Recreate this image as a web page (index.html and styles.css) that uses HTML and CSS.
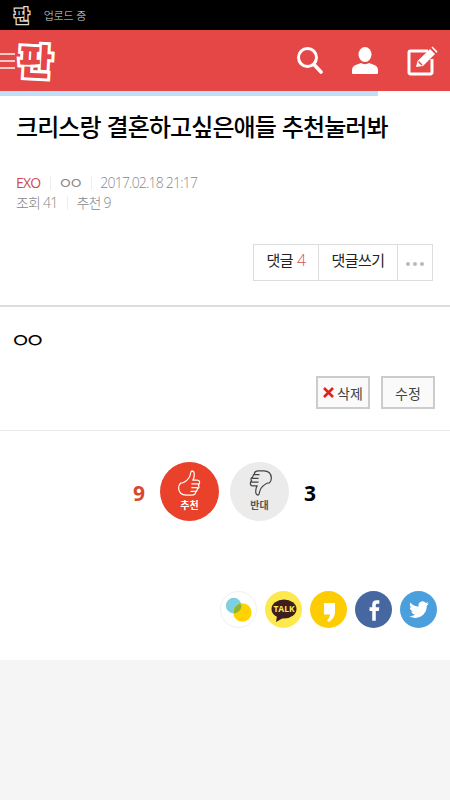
FILE: index.html
```html
<!DOCTYPE html>
<html lang="ko">
<head>
<meta charset="utf-8">
<title>판</title>
<link rel="stylesheet" href="styles.css">
</head>
<body>
<div class="status">
  <span class="status-logo">판</span>
  <span class="status-text">업로드 중</span>
</div>
<header class="top">
  <div class="brand">
    <svg class="burger" width="16" height="20" viewBox="0 0 16 20"><path d="M0 3h15M0 10h15M0 17h15" stroke="#f7c9c7" stroke-width="2"/></svg>
    <span class="logo">판</span>
  </div>
  <div class="tools">
    <svg class="tool-search" width="26" height="27" viewBox="0 0 26 27"><circle cx="10.500" cy="10.500" r="9" fill="none" stroke="#fff" stroke-width="3"/><path d="M17 17.500l7 7.500" stroke="#fff" stroke-width="3.600" stroke-linecap="round"/></svg>
    <svg class="tool-user" width="28" height="27" viewBox="0 0 28 27"><ellipse cx="14" cy="7.500" rx="6.500" ry="7.500" fill="#fff"/><path d="M1 26v-3c0-3 2-4.500 5-5.500l4-1.500c2 1.500 6 1.500 8 0l4 1.500c3 1 5 2.500 5 5.500v3a1 1 0 0 1-1 1H2a1 1 0 0 1-1-1z" fill="#fff"/></svg>
    <svg class="tool-edit" width="31" height="30" viewBox="0 0 31 30"><path d="M21 5H3.500A1.500 1.500 0 0 0 2 6.500v20A1.500 1.500 0 0 0 3.500 28h20a1.500 1.500 0 0 0 1.500-1.500V13" fill="none" stroke="#fff" stroke-width="3"/><path d="M9 21l1.500-6L23 3l5 5-12 12z" fill="#fff"/><path d="M24.500 1.500l1-1 5 5-1 1.500z" fill="#fff"/><path d="M11.500 15.500l3.500 3.500" stroke="#e54646" stroke-width="1.500"/></svg>
  </div>
</header>
<div class="progress"><div class="progress-fill"></div></div>
<main class="article">
  <h1 class="title">크리스랑 결혼하고싶은애들 추천눌러봐</h1>
  <div class="meta">
    <div class="meta-row"><span class="cat">EXO</span><i class="sep"></i><span class="nick">ㅇㅇ</span><i class="sep"></i><span>2017.02.18 21:17</span></div>
    <div class="meta-row"><span>조회 41</span><i class="sep"></i><span>추천 9</span></div>
  </div>
  <div class="reply-wrap">
    <div class="reply-group">
      <a class="reply-btn reply-count">댓글 <em>4</em></a>
      <a class="reply-btn reply-write">댓글쓰기</a>
      <a class="reply-btn reply-more"><i></i><i></i><i></i></a>
    </div>
  </div>
  <div class="body-text"><span class="body-wide">ㅇㅇ</span></div>
  <div class="edit-row">
    <a class="edit-btn edit-del"><svg width="11" height="11" viewBox="0 0 11 11"><path d="M1 1l9 9M10 1l-9 9" stroke="#e32119" stroke-width="2.600"/></svg>삭제</a>
    <a class="edit-btn edit-mod">수정</a>
  </div>
  <div class="vote">
    <span class="vote-num vote-up-num">9</span>
    <div class="vote-btn up">
      <svg width="26" height="28" viewBox="0 0 28 30"><path d="M6 15c4-2 7-5 8-8 1-2 0-4 2-5 3 0 3 4 2 8l-1 2h5c3 0 3 4 1 5 1 2 1 4-1 4 0 2-1 3-2 4 0 2-2 3-4 3h-6c-3 0-5-1-6-2-3-3-3-8 0-11z" fill="none" stroke="#fff" stroke-width="1.300" stroke-linejoin="round"/><path d="M16 16h7M16 20h6M15 24h5" stroke="#fff" stroke-width="1.300" stroke-linecap="round"/></svg>
      <span>추천</span>
    </div>
    <div class="vote-btn down">
      <svg width="26" height="28" viewBox="0 0 28 30"><path d="M22 15c-4 2-7 5-8 8-1 2 0 4-2 5-3 0-3-4-2-8l1-2H6c-3 0-3-4-1-5-1-2-1-4 1-4 0-2 1-3 2-4 0-2 2-3 4-3h6c3 0 5 1 6 2 3 3 3 8 0 11z" fill="none" stroke="#444" stroke-width="1.300" stroke-linejoin="round"/><path d="M12 14H5M12 10H6M13 6H8" stroke="#444" stroke-width="1.300" stroke-linecap="round"/></svg>
      <span>반대</span>
    </div>
    <span class="vote-num vote-down-num">3</span>
  </div>
  <div class="share">
    <span class="share-icon s-story"><svg width="36" height="36" viewBox="0 0 36 36"><circle cx="13" cy="13.500" r="8" fill="#7fcfe0"/><circle cx="22" cy="20.500" r="9.500" fill="#ffd200"/><path d="M13 21.500a9.500 9.500 0 0 1 6.600-10.200 8 8 0 0 1 1.400 2.200 8 8 0 0 1-8 8z" fill="#8cb62e"/></svg></span>
    <span class="share-icon s-talk"><svg width="36" height="36" viewBox="0 0 36 36"><ellipse cx="18" cy="17" rx="12.500" ry="9.500" fill="#3c1e1e"/><path d="M11 24l-1 6 7-4z" fill="#3c1e1e"/><text x="18" y="20" class="talk-text">TALK</text></svg></span>
    <span class="share-icon s-page"><svg width="36" height="36" viewBox="0 0 36 36"><path d="M13 11h11v9c0 4-2 7-6 10l-2-1.500c2-2 3-4 3-6h-6z" fill="#fff"/></svg></span>
    <span class="share-icon s-fb"><svg width="32" height="32" viewBox="0 0 36 36"><path d="M16 30V19h-3v-4h3v-3c0-3.500 2-5 5-5h3v4h-2c-1.500 0-2 .6-2 2v2h4l-.6 4H20v11z" fill="#fff"/></svg></span>
    <span class="share-icon s-tw"><svg width="24" height="24" viewBox="0 0 24 24"><path d="M22 5.500c-.7.300-1.500.6-2.400.7.900-.6 1.500-1.400 1.800-2.300-.8.500-1.700.8-2.600 1a4 4 0 0 0-7 3.700C8.400 8.400 5.400 6.800 3.400 4.400c-1.100 1.900-.5 4.200 1.300 5.400-.7 0-1.300-.2-1.900-.5 0 2 1.400 3.700 3.300 4.100-.6.100-1.200.2-1.900.1.600 1.700 2 2.800 3.900 2.900-1.800 1.300-4 2-6.100 1.700 5.500 3.500 12.800 1.800 16.100-3.800 1.100-1.900 1.700-4.200 1.600-6.400.8-.6 1.500-1.400 2.300-2.400z" fill="#fff"/></svg></span>
  </div>
</main>
<footer class="foot"></footer>
</body>
</html>
```
FILE: styles.css
```css
* { box-sizing: border-box; }
html, body { margin: 0; padding: 0; }
body {
  width: 450px;
  height: 800px;
  overflow: hidden;
  background: #fff;
  color: #000;
  font-family: "Open Sans", "Noto Sans CJK KR", sans-serif;
  display: flex;
  flex-direction: column;
}
a { color: inherit; text-decoration: none; }
.status {
  height: 30px;
  background: #000;
  color: #ddd;
  display: flex;
  align-items: center;
  padding-left: 14px;
  gap: 14px;
}
.status-logo {
  font: 900 17px/30px "Noto Sans CJK KR", sans-serif;
  color: #000;
  -webkit-text-stroke: 2.500px #ddd;
  paint-order: stroke fill;
}
.status-text { font: 300 11px/30px "Noto Sans CJK KR", sans-serif; letter-spacing: -.2px; }
.top {
  height: 61px;
  background: #e54646;
  display: flex;
  align-items: center;
  justify-content: space-between;
  padding: 0 12px 0 0;
}
.brand { display: flex; align-items: center; }
.burger { margin-right: 3px; }
.logo {
  font: 900 36px/44px "Noto Sans CJK KR", sans-serif;
  color: #e54646;
  -webkit-text-stroke: 6px #fff;
  paint-order: stroke fill;
  transform: rotate(3deg);
  margin-top: -4px;
}
.tools { display: flex; align-items: center; gap: 28px; }
.progress { height: 5px; background: #fff; }
.progress-fill { width: 378px; height: 100%; background: #bfe0f7; }
.article { flex: 1; display: flex; flex-direction: column; }
.title {
  margin: 13px 0 0 16px;
  font: 500 24px/34px "Noto Sans CJK KR", sans-serif;
  letter-spacing: -.9px;
}
.meta { margin: 30px 0 0 16px; font-size: 14px; line-height: 20px; color: #888; letter-spacing: -.8px; }
.meta-row { display: flex; align-items: center; height: 20px; }
.meta-row span { font-family: "Open Sans", "Noto Sans CJK KR", sans-serif; font-weight: 300; }
.meta-row .cat { color: #cf4a50; font-weight: 400; }
.sep { width: 1px; height: 14px; background: #eee; margin: 0 8px 0 10px; }
.meta-row .nick {
  width: 23px;
  margin-left: -1px;
  font-weight: 400;
  letter-spacing: -3.600px;
  transform: scaleX(1.15);
  transform-origin: left center;
  white-space: nowrap;
}
.reply-wrap { display: flex; justify-content: flex-end; margin: 31px 17px 0 0; }
.reply-group { display: flex; height: 37px; border: 1px solid #ddd; }
.reply-btn {
  display: flex;
  align-items: center;
  justify-content: center;
  font: 400 15px/1 "Open Sans", "Noto Sans CJK KR", sans-serif;
  color: #222;
  letter-spacing: -.5px;
  border-left: 1px solid #ddd;
  padding-bottom: 5px;
}
.reply-btn:first-child { border-left: 0; }
.reply-count { width: 64px; }
.reply-count em { font-style: normal; font-weight: 300; font-size: 16px; color: #e05050; margin-left: 4px; }
.reply-write { width: 79px; }
.reply-more { width: 35px; gap: 3px; padding: 3px 0 0; }
.reply-more i { width: 4px; height: 4px; border-radius: 50%; background: #bbb; }
.body-text {
  margin: 24px 0 0;
  padding: 19px 0 0 10px;
  border-top: 2px solid #ddd;
  font: 400 20px/28px "Noto Sans CJK KR", sans-serif;
  height: 71px;
}
.body-wide {
  display: inline-block;
  letter-spacing: -5.700px;
  transform: scaleX(1.15);
  transform-origin: left center;
  white-space: nowrap;
}
.edit-row {
  display: flex;
  justify-content: flex-end;
  gap: 11px;
  padding-right: 15px;
}
.edit-btn {
  height: 33px;
  border: 2px solid #ccc;
  background: #fafafa;
  display: flex;
  align-items: center;
  justify-content: center;
  gap: 3px;
  font: 400 14px/1 "Noto Sans CJK KR", sans-serif;
  color: #444;
}
.edit-del { width: 54px; }
.edit-mod { width: 54px; }
.vote {
  margin-top: 21px;
  border-top: 1px solid #e8e8e8;
  padding-top: 31px;
  display: flex;
  justify-content: center;
  align-items: center;
  gap: 11px;
  padding-right: 1px;
}
.vote-num { font: 700 21px/1 "Open Sans", sans-serif; width: 20px; text-align: center; position: relative; top: 2px; }
.vote-up-num { color: #d9482b; }
.vote-down-num { color: #000; }
.vote-btn {
  width: 59px;
  height: 59px;
  border-radius: 50%;
  display: flex;
  flex-direction: column;
  align-items: center;
  justify-content: flex-start;
  padding-top: 7px;
  font: 700 10px/12px "Noto Sans CJK KR", sans-serif;
}
.vote-btn span { margin-top: 2px; }
.up { background: #e9412a; color: #fff; }
.down { background: #ebebeb; color: #555; }
.share {
  display: flex;
  justify-content: flex-end;
  gap: 8px;
  margin-top: 70px;
  padding-right: 13px;
}
.share-icon {
  width: 37px;
  height: 37px;
  border-radius: 50%;
  display: flex;
  align-items: center;
  justify-content: center;
}
.s-story { border: 1px solid #f0f0f0; background: #fff; }
.s-talk { background: #fde84e; }
.s-page { background: #fdcc02; }
.s-fb { background: #4667a0; }
.s-tw { background: #4a9fdc; }
.talk-text { font: 700 8.500px "Open Sans", sans-serif; fill: #fde84e; text-anchor: middle; }
.foot { height: 140px; background: #f5f5f5; flex: none; }
```
